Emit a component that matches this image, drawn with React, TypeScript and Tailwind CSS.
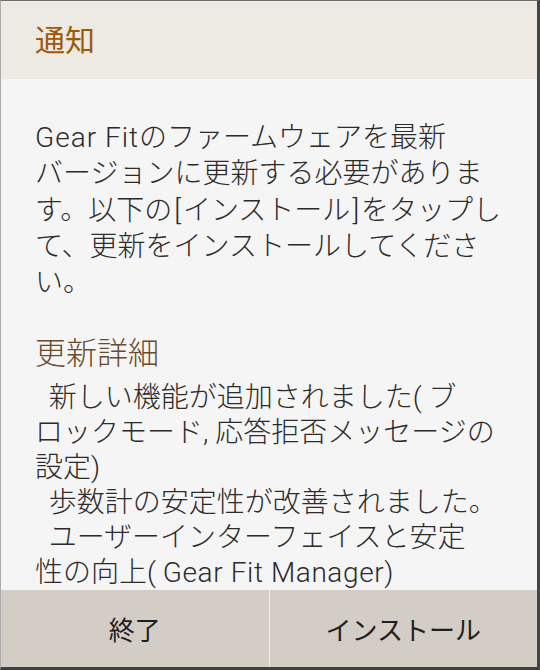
import React from "react";

const font = { fontFamily: 'Roboto, "Noto Sans CJK JP", sans-serif' };

export default function App() {
  const para: React.ReactNode[] = [
    <>
      <span className="tracking-[1px]">Gear Fit</span>のファームウェアを最新
    </>,
    "バージョンに更新する必要がありま",
    <>
      す。以下の<span className="px-[2px]">[</span>インストール<span className="px-[2px]">]</span>をタップし
    </>,
    "て、更新をインストールしてくださ",
    "い。",
  ];
  const items: React.ReactNode[] = [
    "  新しい機能が追加されました( ブ",
    "ロックモード, 応答拒否メッセージの",
    "設定)",
    "  歩数計の安定性が改善されました。",
    "  ユーザーインターフェイスと安定",
    <>
      性の向上( <span className="tracking-[0.6px]">Gear Fit Manager</span>)
    </>,
  ];
  return (
    <div
      className="w-[540px] h-[670px] flex flex-col border-t border-t-[#6e6e6e] border-l border-l-[#acacac] border-r-[3px] border-r-[#444444] border-b-[3px] border-b-[#404040] overflow-hidden"
      style={font}
    >
      <div className="h-[78px] shrink-0 bg-[#ede9e3] flex items-center pl-[34px]">
        <span className="text-[30px] leading-[36px] text-[#9a5a0a] pt-[2px]">通知</span>
      </div>
      <div className="flex-1 bg-[#f5f5f5] pl-[34px] pt-[41px] overflow-hidden text-[#2b2b2b] font-light">
        <div className="text-[28px] leading-[36.25px]">
          {para.map((l, i) => (
            <div key={i} className="whitespace-pre">{l}</div>
          ))}
        </div>
        <div className="mt-[33px] text-[31px] leading-[40px] text-[#6a4c2a]">更新詳細</div>
        <div className="mt-[6px] text-[28px] leading-[35px]">
          {items.map((l, i) => (
            <div key={i} className="whitespace-pre">{l}</div>
          ))}
        </div>
      </div>
      <div className="h-[77px] shrink-0 flex bg-[#d3cdc6] text-[26px] text-[#1e1e1e]">
        <div className="flex-1 flex items-center justify-center pt-[5px]">終了</div>
        <div className="w-px bg-[#f2f0ed]" />
        <div className="flex-1 flex items-center justify-center pt-[5px]">インストール</div>
      </div>
    </div>
  );
}
